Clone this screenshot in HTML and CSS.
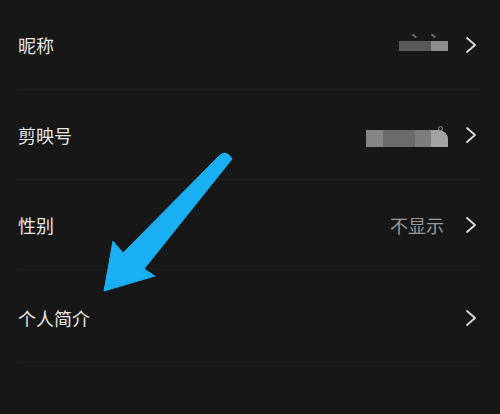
FILE: index.html
```html
<!DOCTYPE html>
<html lang="zh">
<head>
<meta charset="utf-8">
<link rel="stylesheet" href="styles.css">
</head>
<body>
<div class="page">
  <div class="list">
    <div class="row">
      <span class="label">昵称</span>
      <div class="right">
        <div class="blur blur-name">
          <span class="mark mark-a"></span>
          <span class="mark mark-b"></span>
          <span class="seg seg-dark"></span>
          <span class="seg seg-light"></span>
        </div>
        <svg class="chev" viewBox="0 0 12 18"><path d="M2 2 L10 9 L2 16" /></svg>
      </div>
    </div>
    <div class="row">
      <span class="label">剪映号</span>
      <div class="right">
        <div class="blur blur-id">
          <span class="seg s1"></span>
          <span class="seg s2"></span>
          <span class="seg s3"></span>
          <span class="seg s4"></span>
          <span class="dot"></span>
        </div>
        <svg class="chev" viewBox="0 0 12 18"><path d="M2 2 L10 9 L2 16" /></svg>
      </div>
    </div>
    <div class="row">
      <span class="label">性别</span>
      <div class="right">
        <span class="value">不显示</span>
        <svg class="chev" viewBox="0 0 12 18"><path d="M2 2 L10 9 L2 16" /></svg>
      </div>
    </div>
    <div class="row row-last">
      <span class="label">个人简介</span>
      <div class="right">
        <svg class="chev" viewBox="0 0 12 18"><path d="M2 2 L10 9 L2 16" /></svg>
      </div>
    </div>
  </div>
  <svg class="arrow" viewBox="0 0 500 414" width="500" height="414">
    <path d="M219 156 Q226 149 232 159 L144 269 L155 276 L104 291 L113 241 L123 253 Z" />
  </svg>
</div>
</body>
</html>
```

FILE: styles.css
```css
html, body {
  margin: 0;
  padding: 0;
  background: #171717;
}
.page {
  position: relative;
  width: 500px;
  height: 414px;
  overflow: hidden;
  background: #171717;
  font-family: "Noto Sans CJK SC", "Noto Sans", sans-serif;
}
.list {
  display: flex;
  flex-direction: column;
}
.row {
  height: 90px;
  margin: 0 20px 0 18px;
  display: flex;
  align-items: center;
  justify-content: space-between;
  border-bottom: 1px solid #1e1e1e;
  box-sizing: border-box;
}
.row-last {
  height: 93px;
  padding-top: 4px;
}
.label {
  color: #e6e6e6;
  font-size: 18px;
  line-height: 20px;
}
.right {
  display: flex;
  align-items: center;
  gap: 16px;
}
.value {
  color: #9a9a9a;
  font-size: 18px;
  line-height: 20px;
  margin-right: 5px;
}
.chev {
  width: 12px;
  height: 18px;
  margin-right: 3px;
}
.chev path {
  fill: none;
  stroke: #dcdcdc;
  stroke-width: 1.8;
  stroke-linecap: round;
  stroke-linejoin: round;
}
.blur {
  position: relative;
  display: flex;
  margin-right: 1px;
}
.blur-name {
  height: 10px;
  margin-top: 2px;
}
.blur-name .seg-dark {
  width: 32px;
  background: #595959;
}
.blur-name .seg-light {
  width: 17px;
  background: #8c8c8c;
}
.mark {
  position: absolute;
  top: -6px;
  width: 5px;
  height: 1.5px;
  background: #6a6a6a;
  transform: rotate(40deg);
}
.mark-a { left: 13px; }
.mark-b { left: 32px; }
.blur-id {
  height: 17px;
  margin-top: 8px;
}
.blur-id .s1 { width: 17px; background: #858585; }
.blur-id .s2 { width: 32px; background: #6b6b6b; }
.blur-id .s3 { width: 16px; background: #7c7c7c; }
.blur-id .s4 { width: 17px; background: #a3a3a3; border-top-right-radius: 9px; }
.dot {
  position: absolute;
  right: 5px;
  top: -4px;
  width: 5px;
  height: 5px;
  border: 1px solid #8a8a8a;
  border-radius: 50%;
  box-sizing: border-box;
}
.arrow {
  position: absolute;
  left: 0;
  top: 0;
}
.arrow path {
  fill: #1aaef2;
  stroke: #1aaef2;
  stroke-width: 1;
  stroke-linejoin: round;
}
```
